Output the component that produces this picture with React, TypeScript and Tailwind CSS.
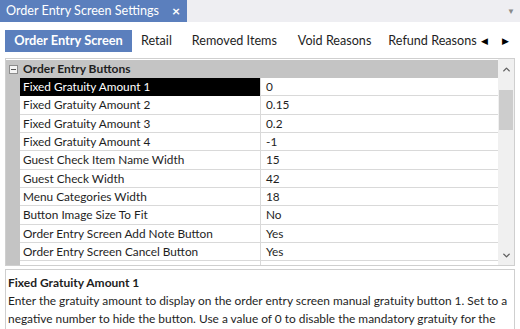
import { ChevronUp, ChevronDown } from 'lucide-react'

const rows: [string, string][] = [
    ['Fixed Gratuity Amount 1', '0'],
    ['Fixed Gratuity Amount 2', '0.15'],
    ['Fixed Gratuity Amount 3', '0.2'],
    ['Fixed Gratuity Amount 4', '-1'],
    ['Guest Check Item Name Width', '15'],
    ['Guest Check Width', '42'],
    ['Menu Categories Width', '18'],
    ['Button Image Size To Fit', 'No'],
    ['Order Entry Screen Add Note Button', 'Yes'],
    ['Order Entry Screen Cancel Button', 'Yes'],
    ['', ''],
]

export default function App() {
    return (
        <div
            className="w-[520px] h-[329px] overflow-hidden bg-white flex flex-col text-[#1e1e1e]"
            style={{ fontFamily: 'Lato, "Noto Sans", sans-serif' }}
        >
            {/* Document tab strip */}
            <div className="h-[22px] bg-[#eeeef2] flex items-stretch shrink-0">
                <div className="w-[187px] bg-[#5b7fbd] text-white flex items-center pl-[6px] pr-[7px] text-[12.6px]">
                    <span className="flex-1 whitespace-nowrap">Order Entry Screen Settings</span>
                    <span className="text-[14px] font-bold leading-none">×</span>
                </div>
                <div className="flex-1" />
                <div className="w-[13px] flex items-center text-[#8a8a8a] text-[8px]">▼</div>
            </div>

            {/* Section tabs */}
            <div className="h-[36px] shrink-0 flex items-end px-[5px] pb-[6px]">
                <div className="h-[22px] flex items-center w-full text-[12.6px] whitespace-nowrap">
                    <div className="h-full w-[127px] bg-[#5b7fbd] text-white font-bold text-[12.8px] flex items-center justify-center">
                        Order Entry Screen
                    </div>
                    <span className="ml-[9px]">Retail</span>
                    <span className="ml-[20px]">Removed Items</span>
                    <span className="ml-[21px]">Void Reasons</span>
                    <span className="ml-[17px]">Refund Reasons</span>
                    <div className="flex items-center gap-[14px] ml-[4px] text-[9px] text-black">
                        <span>◀</span>
                        <span>▶</span>
                    </div>
                </div>
            </div>

            {/* Property grid */}
            <div className="mx-[5px] h-[208px] shrink-0 border border-[#cfcfcf] flex overflow-hidden">
                <div className="flex-1 flex flex-col overflow-hidden pt-[1px] text-[11.8px]">
                    <div className="h-[18px] shrink-0 bg-[#c4c4c4] flex items-center font-bold">
                        <div className="w-[14px] flex justify-center items-center">
                            <span className="w-[9px] h-[9px] border border-[#8c8c8c] bg-[#f4f4f4] flex items-center justify-center">
                                <span className="w-[5px] h-[1px] bg-[#555]" />
                            </span>
                        </div>
                        <span className="pl-[3px] text-[12px]">Order Entry Buttons</span>
                    </div>
                    {rows.map(([name, value], i) => (
                        <div key={i} className="h-[18.35px] shrink-0 flex">
                            <div className="w-[14px] bg-[#c4c4c4]" />
                            <div
                                className={
                                    i === 0
                                        ? 'w-[240px] bg-black text-white flex items-center pl-[3px] whitespace-nowrap'
                                        : 'w-[240px] border-b border-[#d9d9d9] flex items-center pl-[3px] whitespace-nowrap'
                                }
                            >
                                {name}
                            </div>
                            <div className="flex-1 border-l border-[#d9d9d9] border-b flex items-center pl-[5px]">
                                {value}
                            </div>
                        </div>
                    ))}
                </div>
                <div className="w-[16px] bg-[#f0f0f0] flex flex-col items-center">
                    <ChevronUp className="w-[11px] h-[11px] mt-[5px] text-[#606060]" strokeWidth={3} />
                    <div className="w-[14px] h-[40px] bg-[#cdcdcd] mt-[15px]" />
                    <div className="flex-1" />
                    <ChevronDown className="w-[11px] h-[11px] mb-[4px] text-[#606060]" strokeWidth={3} />
                </div>
            </div>

            {/* Description panel */}
            <div className="mx-[5px] mt-[3px] flex-1 border border-[#cfcfcf] border-b-0 px-[2px] pt-[4px] text-[11.9px] leading-[18px] overflow-hidden">
                <div className="font-bold whitespace-nowrap text-[12px]">Fixed Gratuity Amount 1</div>
                <div className="whitespace-nowrap">
                    Enter the gratuity amount to display on the order entry screen manual gratuity button 1. Set to a
                </div>
                <div className="whitespace-nowrap">
                    negative number to hide the button. Use a value of 0 to disable the mandatory gratuity for the
                </div>
                <div className="whitespace-nowrap">order entry screen.</div>
            </div>
        </div>
    )
}
